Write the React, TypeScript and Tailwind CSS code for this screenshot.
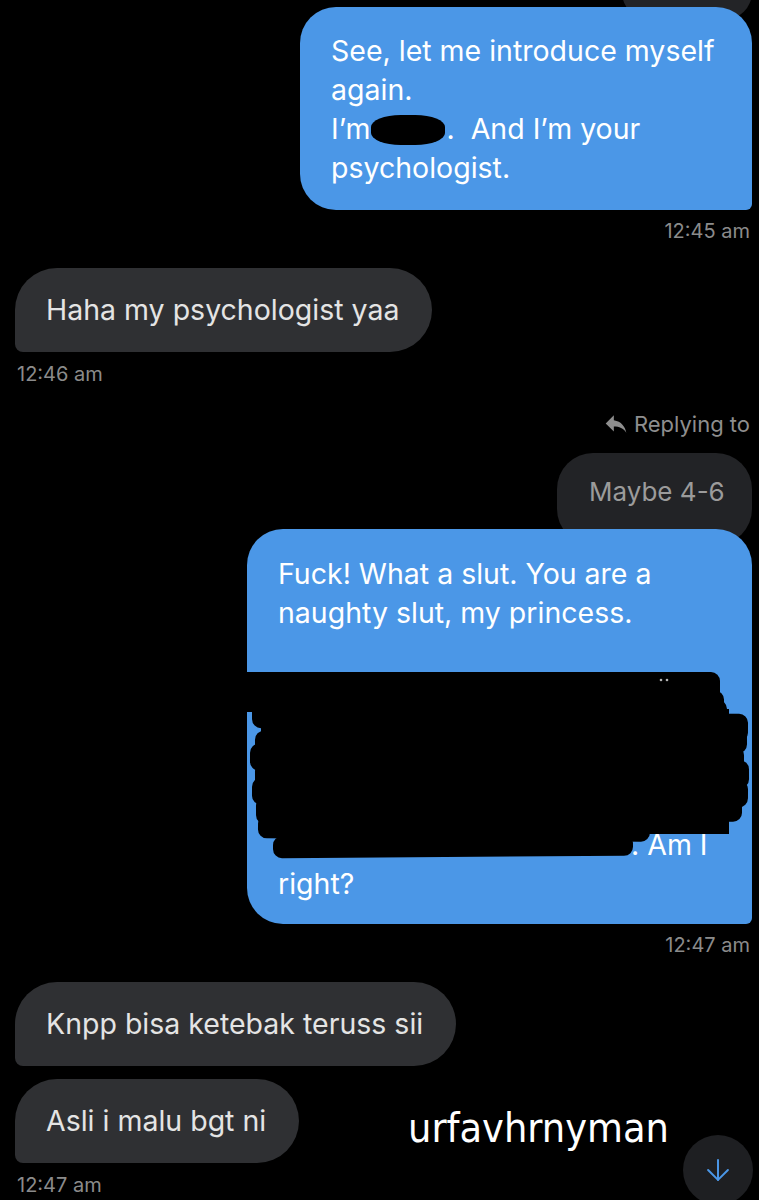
import { ArrowDown } from "lucide-react";

// Hilo de mensajes directos, modo oscuro.
function Hora({ lado, children }: { lado: "izq" | "der"; children: string }) {
  return (
    <div
      className={[
        "text-[20px] leading-[24px] text-[#8b8b8b]",
        lado === "der" ? "self-end mr-[9px]" : "ml-[17px]",
      ].join(" ")}
    >
      {children}
    </div>
  );
}

function BurbujaGris({ children, className = "" }: { children: string; className?: string }) {
  return (
    <div
      className={[
        "self-start ml-[15px] rounded-[42px] rounded-bl-[8px] bg-[#2f3033] pl-[31px] pr-[33px] py-[22px] text-[28.5px] leading-[40px] text-[#e4e4e4]",
        className,
      ].join(" ")}
    >
      {children}
    </div>
  );
}

function Tachado() {
  // garabatos negros sobre el texto censurado (coordenadas de la burbuja)
  const trazos: [number, number, number, number, number][] = [
    [0, 143, 473, 30, 0],
    [11, 160, 466, 26, 0.4],
    [5, 172, 475, 26, -0.3],
    [15, 184, 486, 28, 0.2],
    [8, 200, 492, 26, -0.4],
    [3, 216, 494, 27, 0.3],
    [8, 232, 494, 28, -0.2],
    [5, 250, 496, 27, 0.3],
    [9, 266, 486, 28, -0.3],
    [11, 287, 392, 24, 0.5],
    [26, 306, 360, 22, -0.4],
    [196, 318, 185, 8, 0],
  ];
  return (
    <svg
      className="pointer-events-none absolute left-0 top-0"
      width="505"
      height="398"
      viewBox="0 0 505 398"
    >
      <rect x="0" y="143" width="380" height="40" fill="#000" />
      {trazos.map(([x, y, w, h, r], i) => (
        <rect
          key={i}
          x={x}
          y={y}
          width={w}
          height={h}
          rx="9"
          fill="#000"
          transform={`rotate(${r} ${x + w / 2} ${y + h / 2})`}
        />
      ))}
      <rect x="14" y="180" width="468" height="125" fill="#000" />
      <circle cx="414" cy="151" r="1.3" fill="#fff" opacity="0.7" />
      <circle cx="420" cy="151" r="1.3" fill="#fff" opacity="0.7" />
    </svg>
  );
}

export default function App() {
  return (
    <div className="relative flex h-[1200px] w-[759px] flex-col overflow-hidden bg-black font-['Inter',sans-serif]">
      {/* cola de la vista previa anterior */}
      <div className="mr-[7px] -mt-[10px] h-[30px] w-[130px] self-end rounded-b-[28px] bg-[#232427]" />

      <div className="relative mr-[7px] -mt-[13px] w-[452px] self-end rounded-[36px] rounded-br-[6px] bg-[#4b97e7] pb-[23px] pl-[31px] pr-4 pt-[24px] text-[28.5px] leading-[39px] text-white">
        <p>See, let me introduce myself again.</p>
        <p>
          I’m
          <span className="ml-[1px] mr-[1px] inline-block h-[30px] w-[74px] -translate-y-[1px] rounded-[40%] bg-black align-middle" />
          .&nbsp; And I’m your psychologist.
        </p>
      </div>
      <div className="mt-[9px] flex flex-col">
        <Hora lado="der">12:45 am</Hora>
      </div>

      <BurbujaGris className="mt-[25px]">Haha my psychologist yaa</BurbujaGris>
      <div className="mt-[10px] flex flex-col">
        <Hora lado="izq">12:46 am</Hora>
      </div>

      <div className="mr-[9px] mt-[25px] flex items-center gap-[5px] self-end text-[22px] leading-[26px] text-[#8e8e8e]">
        <svg width="26" height="26" viewBox="0 0 24 24" fill="#8e8e8e">
          <path d="M10 8.5V4L2.5 11.5 10 19v-4.6c5.2 0 8.7 1.7 11.5 5.6C20.4 14.4 17 9.6 10 8.5z" />
        </svg>
        Replying to
      </div>

      <div className="mr-[7px] mt-[16px] h-[92px] w-[195px] self-end rounded-[36px] bg-[#222326] pl-[32px] pt-[19px] text-[26px] leading-[40px] text-[#9b9b9b]">
        Maybe 4-6
      </div>

      <div className="relative mr-[7px] -mt-[16px] w-[505px] self-end rounded-[36px] rounded-br-[6px] bg-[#4b97e7] pb-[21px] pl-[31px] pr-4 pt-[26px] text-[28.5px] leading-[38.7px] text-white">
        <p>Fuck! What a slut. You are a naughty slut, my princess.</p>
        <p>&nbsp;</p>
        <p>&nbsp;</p>
        <p>&nbsp;</p>
        <p>&nbsp;</p>
        <p>&nbsp;</p>
        <p className="pl-[353px]">. Am I</p>
        <p>right?</p>
        <Tachado />
      </div>
      <div className="mt-[9px] flex flex-col">
        <Hora lado="der">12:47 am</Hora>
      </div>

      <BurbujaGris className="mt-[25px]">Knpp bisa ketebak teruss sii</BurbujaGris>
      <BurbujaGris className="mt-[13px]">Asli i malu bgt ni</BurbujaGris>
      <div className="mt-[10px] flex flex-col">
        <Hora lado="izq">12:47 am</Hora>
      </div>

      {/* marca de agua */}
      <div className="absolute left-[408px] top-[1102px] font-['Liberation_Sans_Narrow','DejaVu_Sans_Condensed',sans-serif] text-[41px] leading-[52px] text-white">
        urfavhrnyman
      </div>

      <button className="absolute left-[683px] top-[1135px] flex h-[70px] w-[70px] items-center justify-center rounded-full bg-[#1e1f22] text-[#4b97e7]">
        <ArrowDown size={34} strokeWidth={1.4} />
      </button>
    </div>
  );
}
